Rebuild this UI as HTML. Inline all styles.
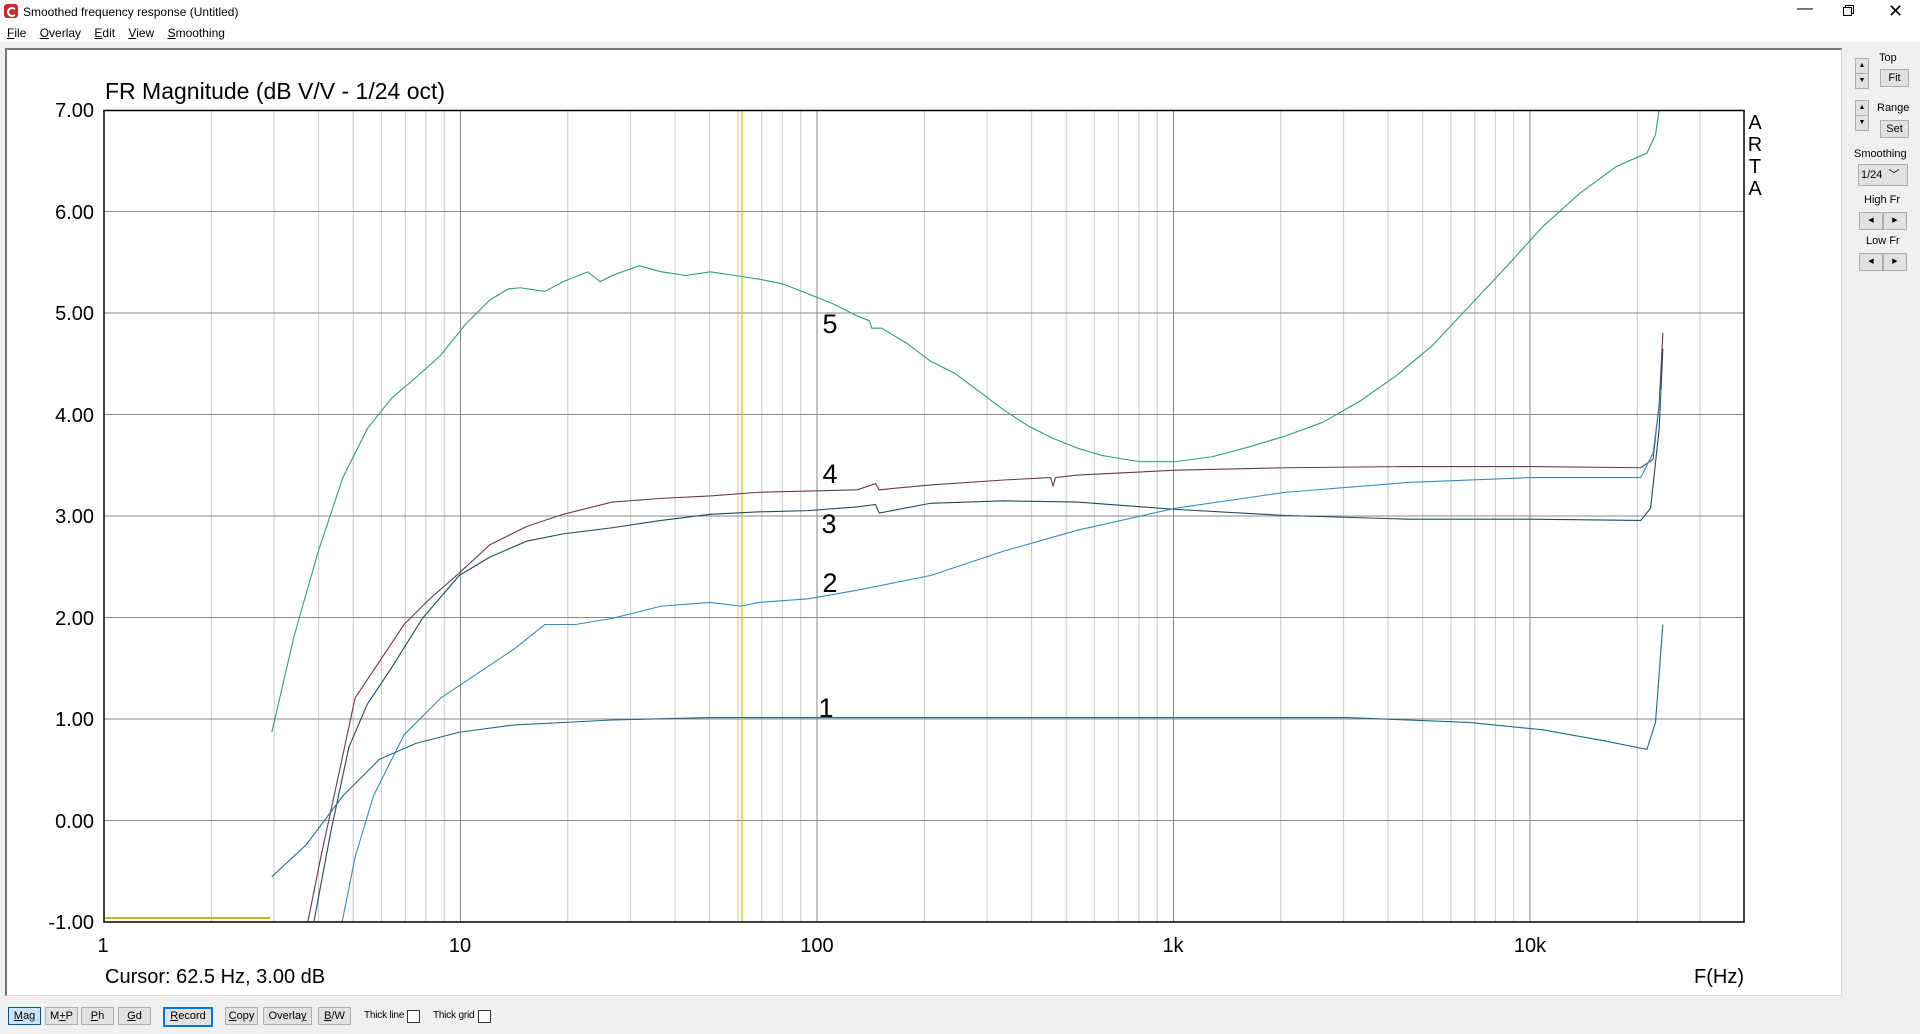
<!DOCTYPE html>
<html><head><meta charset="utf-8"><style>
body{margin:0;width:1920px;height:1034px;background:#f0f0f0;position:relative;overflow:hidden;font-family:"Liberation Sans",sans-serif;}
.t{position:absolute;font-size:12px;color:#000;white-space:nowrap}
.btn{position:absolute;height:16px;border:1px solid #adadad;background:#e1e1e1;font-size:11px;text-align:center;line-height:16px;box-sizing:content-box}
.sp{position:absolute;width:12px;height:14px;border:1px solid #adadad;background:#e1e1e1;font-size:7px;text-align:center;line-height:14px}
</style></head><body>
<div style="position:absolute;left:0;top:0;width:1920px;height:25px;background:#fff"></div>
<div style="position:absolute;left:4px;top:4px;width:14px;height:14px;background:#c0302a;border-radius:3px"><div style="position:absolute;left:3px;top:3px;width:6px;height:6px;border:2px solid #fff;border-radius:50%;border-right-color:transparent"></div></div>
<div class="t" style="left:23px;top:5px">Smoothed frequency response (Untitled)</div>
<div class="t" style="left:1797px;top:0px;font-size:16px">—</div>
<div style="position:absolute;left:1845px;top:5px;width:7px;height:7px;border:1px solid #000"></div>
<div style="position:absolute;left:1843px;top:7px;width:7px;height:7px;border:1px solid #000;background:#fff"></div>
<div class="t" style="left:1888px;top:1px;font-size:18px">✕</div>
<div style="position:absolute;left:0;top:25px;width:1920px;height:17px;background:#fff"></div>
<div class="t" style="left:7px;top:26px"><u>F</u>ile&nbsp;&nbsp;&nbsp; <u>O</u>verlay&nbsp;&nbsp;&nbsp; <u>E</u>dit&nbsp;&nbsp;&nbsp; <u>V</u>iew&nbsp;&nbsp;&nbsp; <u>S</u>moothing</div>
<div style="position:absolute;left:5px;top:48px;width:1834px;height:945px;background:#fff;border:1px solid #d8d8d8;border-left:2px solid #777;border-top:2px solid #777"></div>

<svg style="position:absolute;left:0;top:0" width="1920" height="1034" font-family="Liberation Sans, sans-serif">
<defs>
<g id="dec" stroke="#c8c8c8" stroke-width="1">
<line x1="107.3" y1="110" x2="107.3" y2="922"/><line x1="170.1" y1="110" x2="170.1" y2="922"/><line x1="214.6" y1="110" x2="214.6" y2="922"/><line x1="249.2" y1="110" x2="249.2" y2="922"/><line x1="277.4" y1="110" x2="277.4" y2="922"/><line x1="301.3" y1="110" x2="301.3" y2="922"/><line x1="321.9" y1="110" x2="321.9" y2="922"/><line x1="340.2" y1="110" x2="340.2" y2="922"/>
<line x1="356.5" y1="110" x2="356.5" y2="922" stroke="#888"/>
</g>
<clipPath id="cp"><rect x="104" y="110" width="1640" height="812"/></clipPath>
</defs>
<g clip-path="url(#cp)">
<g transform="translate(104,0)"><use href="#dec"/><use href="#dec" x="356.5"/><use href="#dec" x="713"/><use href="#dec" x="1069.5"/><use href="#dec" x="1426"/></g>
<g stroke="#888" stroke-width="1">
<line x1="104" y1="211.5" x2="1744" y2="211.5"/><line x1="104" y1="313" x2="1744" y2="313"/><line x1="104" y1="414.5" x2="1744" y2="414.5"/><line x1="104" y1="516" x2="1744" y2="516"/><line x1="104" y1="617.5" x2="1744" y2="617.5"/><line x1="104" y1="719" x2="1744" y2="719"/><line x1="104" y1="820.5" x2="1744" y2="820.5"/>
</g>
<line x1="742" y1="110" x2="742" y2="922" stroke="#d8c840" stroke-width="1.5"/>
<line x1="104" y1="918" x2="270" y2="918" stroke="#c8b820" stroke-width="2"/>
<g transform="scale(1.22449)" fill="none" stroke-width="1.1" stroke-linejoin="round">
<path vector-effect="non-scaling-stroke" stroke="#2e9e78" d="M222,598 L240,520 260,450 280,390 300,350 320,325 340,308 360,290 380,265 400,245 415,236 425,235 445,238 460,230 480,222 490,230 500,225 522,217 540,222 560,225 580,222 600,225 620,228 640,232 660,240 680,248 700,258 710,262 712,268 720,268 740,280 760,295 780,305 800,320 820,335 840,348 860,358 880,366 900,372 930,377 960,377 990,373 1020,365 1050,356 1080,345 1110,328 1140,307 1170,282 1200,250 1230,218 1260,185 1290,158 1320,136 1345,125 1352,110 1355,89"/>
<path vector-effect="non-scaling-stroke" stroke="#6b3a4a" d="M250,760 L262,700 275,640 290,570 310,540 330,510 350,490 375,468 400,445 430,430 460,420 500,410 540,407 580,405 620,402 660,401 700,400 715,395 718,400 760,396 820,392 858,390 860,397 862,390 880,388 960,384 1050,382 1150,381 1250,381 1340,382 1350,375 1355,330 1358,272"/>
<path vector-effect="non-scaling-stroke" stroke="#1f4a5a" d="M255,760 L270,680 285,610 300,575 320,545 345,505 375,470 400,455 430,442 460,436 500,431 540,425 580,420 620,418 660,417 700,414 715,412 718,419 760,411 820,409 880,410 960,416 1050,421 1150,424 1250,424 1340,425 1348,415 1355,350 1358,285"/>
<path vector-effect="non-scaling-stroke" stroke="#3a8cb5" d="M278,760 L290,700 305,650 330,600 360,570 390,550 420,530 445,510 470,510 500,505 540,495 580,492 605,495 620,492 660,489 700,482 760,470 820,450 880,433 960,415 1050,402 1150,394 1250,390 1340,390 1350,370 1357,315"/>
<path vector-effect="non-scaling-stroke" stroke="#1f6b80" d="M222,716 L250,690 280,650 310,620 340,607 375,598 420,592 500,588 580,586 700,586 800,586 960,586 1100,586 1200,590 1260,596 1310,605 1345,612 1352,590 1358,510"/>
</g>
</g>
<rect x="104" y="110.5" width="1640" height="811.5" fill="none" stroke="#000" stroke-width="1.5"/>
<text x="105" y="99" font-size="23">FR Magnitude (dB V/V - 1/24 oct)</text>
<g font-size="20" text-anchor="end">
<text x="94" y="117">7.00</text><text x="94" y="219">6.00</text><text x="94" y="320">5.00</text><text x="94" y="422">4.00</text><text x="94" y="523">3.00</text><text x="94" y="625">2.00</text><text x="94" y="726">1.00</text><text x="94" y="828">0.00</text><text x="94" y="929">-1.00</text>
</g>
<g font-size="20" text-anchor="middle">
<text x="103" y="952">1</text><text x="460" y="952">10</text><text x="817" y="952">100</text><text x="1173" y="952">1k</text><text x="1530" y="952">10k</text>
</g>
<text x="105" y="983" font-size="20">Cursor: 62.5 Hz, 3.00 dB</text>
<text x="1744" y="983" font-size="20" text-anchor="end">F(Hz)</text>
<g font-size="20" text-anchor="middle"><text x="1755" y="129">A</text><text x="1755" y="151">R</text><text x="1755" y="173">T</text><text x="1755" y="195">A</text></g>
<g font-size="27" text-anchor="middle"><text x="830" y="333">5</text><text x="830" y="483">4</text><text x="829" y="533">3</text><text x="830" y="592">2</text><text x="826" y="717">1</text></g>
</svg>

<div class="btn" style="left:8px;top:1007px;width:31px;background:#cce4f7;border-color:#005499"><u>M</u>ag</div>
<div class="btn" style="left:45px;top:1007px;width:31px">M<u>+</u>P</div>
<div class="btn" style="left:81px;top:1007px;width:31px"><u>P</u>h</div>
<div class="btn" style="left:118px;top:1007px;width:31px"><u>G</u>d</div>
<div class="btn" style="left:163px;top:1007px;width:46px;border:2px solid #0078d7;line-height:15px"><u>R</u>ecord</div>
<div class="btn" style="left:225px;top:1007px;width:31px"><u>C</u>opy</div>
<div class="btn" style="left:263px;top:1007px;width:47px">Overla<u>y</u></div>
<div class="btn" style="left:318px;top:1007px;width:31px"><u>B</u>/W</div>
<div class="t" style="left:364px;top:1010px;font-size:10px;letter-spacing:-0.2px">Thick line</div>
<div style="position:absolute;left:407px;top:1010px;width:11px;height:11px;border:1px solid #333;background:#fff"></div>
<div class="t" style="left:433px;top:1010px;font-size:10px;letter-spacing:-0.2px">Thick grid</div>
<div style="position:absolute;left:478px;top:1010px;width:11px;height:11px;border:1px solid #333;background:#fff"></div>

<div class="sp" style="left:1855px;top:58px">▲</div><div class="sp" style="left:1855px;top:73px">▼</div>
<div class="t" style="left:1879px;top:52px;font-size:11px">Top</div>
<div class="btn" style="left:1880px;top:69px;width:27px">Fit</div>
<div class="sp" style="left:1855px;top:100px">▲</div><div class="sp" style="left:1855px;top:115px">▼</div>
<div class="t" style="left:1877px;top:102px;font-size:11px">Range</div>
<div class="btn" style="left:1880px;top:120px;width:27px">Set</div>
<div class="t" style="left:1854px;top:148px;font-size:11px">Smoothing</div>
<div class="btn" style="left:1858px;top:164px;height:20px;line-height:20px;text-align:left;padding-left:2px;width:46px">1/24 &nbsp;﹀</div>
<div class="t" style="left:1864px;top:194px;font-size:11px">High Fr</div>
<div class="btn" style="left:1859px;top:212px;width:22px;font-size:7px">◀</div><div class="btn" style="left:1883px;top:212px;width:22px;font-size:7px">▶</div>
<div class="t" style="left:1866px;top:235px;font-size:11px">Low Fr</div>
<div class="btn" style="left:1859px;top:253px;width:22px;font-size:7px">◀</div><div class="btn" style="left:1883px;top:253px;width:22px;font-size:7px">▶</div>
</body></html>
